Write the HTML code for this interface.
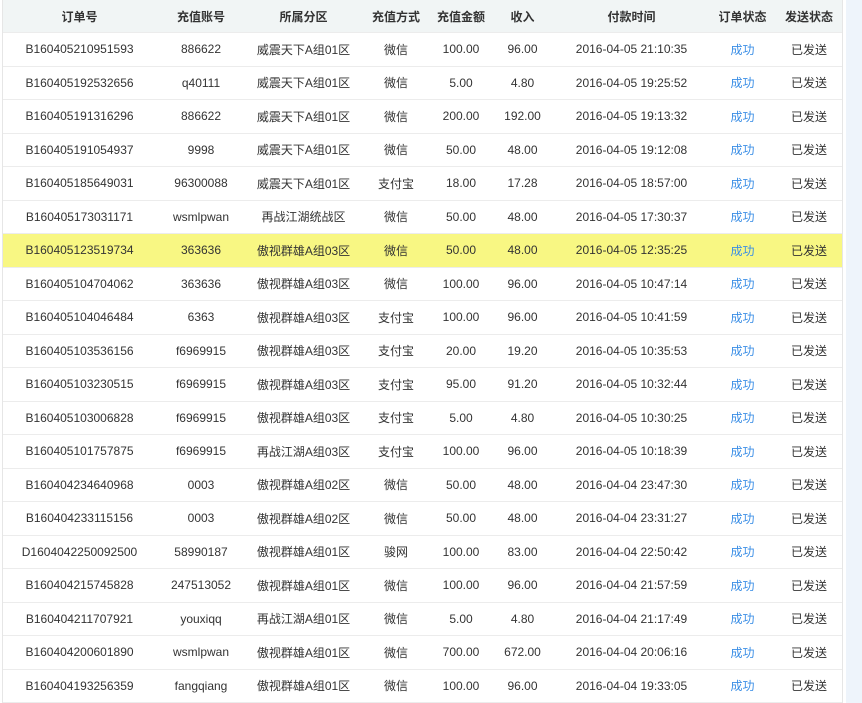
<!DOCTYPE html>
<html><head><meta charset="utf-8"><style>
*{margin:0;padding:0;box-sizing:border-box}
body{width:862px;height:703px;overflow:hidden;background:#fff;font-family:"Liberation Sans","Noto Sans CJK SC",sans-serif;font-size:12px;color:#333;position:relative}
.side{position:absolute;left:846px;top:0;width:16px;height:703px;background:#eef4fb}
.tbl{position:absolute;left:2px;top:0;width:841px;height:703px;border-left:1px solid #e6e6e6;border-right:1px solid #e6e6e6}
.r{position:absolute;left:0;width:839px;height:33.5px;border-bottom:1px solid #ececec;display:flex;align-items:center}
.h{top:0;height:33px;background:#f1f5f5;font-weight:bold;color:#333}
.y{background:#f8f783}
.r span{display:block;text-align:center;white-space:nowrap}
.c1{width:153px}.c2{width:90px}.c3{width:115px}.c4{width:70px}.c5{width:60px}.c6{width:63px}.c7{width:155px}.c8{width:67px}.c9{width:66px}
.ok{color:#3a8ee6}
</style></head><body>
<div class="side"></div>
<div class="tbl">
<div class="r h"><span class="c1">订单号</span><span class="c2">充值账号</span><span class="c3">所属分区</span><span class="c4">充值方式</span><span class="c5">充值金额</span><span class="c6">收入</span><span class="c7">付款时间</span><span class="c8">订单状态</span><span class="c9">发送状态</span></div>
<div id="rows"></div>
</div>
<div class="r" style="top:33px;left:3px"><span class="c1">B160405210951593</span><span class="c2">886622</span><span class="c3">威震天下A组01区</span><span class="c4">微信</span><span class="c5">100.00</span><span class="c6">96.00</span><span class="c7">2016-04-05 21:10:35</span><span class="c8 ok">成功</span><span class="c9">已发送</span></div>
<div class="r" style="top:66.5px;left:3px"><span class="c1">B160405192532656</span><span class="c2">q40111</span><span class="c3">威震天下A组01区</span><span class="c4">微信</span><span class="c5">5.00</span><span class="c6">4.80</span><span class="c7">2016-04-05 19:25:52</span><span class="c8 ok">成功</span><span class="c9">已发送</span></div>
<div class="r" style="top:100px;left:3px"><span class="c1">B160405191316296</span><span class="c2">886622</span><span class="c3">威震天下A组01区</span><span class="c4">微信</span><span class="c5">200.00</span><span class="c6">192.00</span><span class="c7">2016-04-05 19:13:32</span><span class="c8 ok">成功</span><span class="c9">已发送</span></div>
<div class="r" style="top:133.5px;left:3px"><span class="c1">B160405191054937</span><span class="c2">9998</span><span class="c3">威震天下A组01区</span><span class="c4">微信</span><span class="c5">50.00</span><span class="c6">48.00</span><span class="c7">2016-04-05 19:12:08</span><span class="c8 ok">成功</span><span class="c9">已发送</span></div>
<div class="r" style="top:167px;left:3px"><span class="c1">B160405185649031</span><span class="c2">96300088</span><span class="c3">威震天下A组01区</span><span class="c4">支付宝</span><span class="c5">18.00</span><span class="c6">17.28</span><span class="c7">2016-04-05 18:57:00</span><span class="c8 ok">成功</span><span class="c9">已发送</span></div>
<div class="r" style="top:200.5px;left:3px"><span class="c1">B160405173031171</span><span class="c2">wsmlpwan</span><span class="c3">再战江湖统战区</span><span class="c4">微信</span><span class="c5">50.00</span><span class="c6">48.00</span><span class="c7">2016-04-05 17:30:37</span><span class="c8 ok">成功</span><span class="c9">已发送</span></div>
<div class="r y" style="top:234px;left:3px"><span class="c1">B160405123519734</span><span class="c2">363636</span><span class="c3">傲视群雄A组03区</span><span class="c4">微信</span><span class="c5">50.00</span><span class="c6">48.00</span><span class="c7">2016-04-05 12:35:25</span><span class="c8 ok">成功</span><span class="c9">已发送</span></div>
<div class="r" style="top:267.5px;left:3px"><span class="c1">B160405104704062</span><span class="c2">363636</span><span class="c3">傲视群雄A组03区</span><span class="c4">微信</span><span class="c5">100.00</span><span class="c6">96.00</span><span class="c7">2016-04-05 10:47:14</span><span class="c8 ok">成功</span><span class="c9">已发送</span></div>
<div class="r" style="top:301px;left:3px"><span class="c1">B160405104046484</span><span class="c2">6363</span><span class="c3">傲视群雄A组03区</span><span class="c4">支付宝</span><span class="c5">100.00</span><span class="c6">96.00</span><span class="c7">2016-04-05 10:41:59</span><span class="c8 ok">成功</span><span class="c9">已发送</span></div>
<div class="r" style="top:334.5px;left:3px"><span class="c1">B160405103536156</span><span class="c2">f6969915</span><span class="c3">傲视群雄A组03区</span><span class="c4">支付宝</span><span class="c5">20.00</span><span class="c6">19.20</span><span class="c7">2016-04-05 10:35:53</span><span class="c8 ok">成功</span><span class="c9">已发送</span></div>
<div class="r" style="top:368px;left:3px"><span class="c1">B160405103230515</span><span class="c2">f6969915</span><span class="c3">傲视群雄A组03区</span><span class="c4">支付宝</span><span class="c5">95.00</span><span class="c6">91.20</span><span class="c7">2016-04-05 10:32:44</span><span class="c8 ok">成功</span><span class="c9">已发送</span></div>
<div class="r" style="top:401.5px;left:3px"><span class="c1">B160405103006828</span><span class="c2">f6969915</span><span class="c3">傲视群雄A组03区</span><span class="c4">支付宝</span><span class="c5">5.00</span><span class="c6">4.80</span><span class="c7">2016-04-05 10:30:25</span><span class="c8 ok">成功</span><span class="c9">已发送</span></div>
<div class="r" style="top:435px;left:3px"><span class="c1">B160405101757875</span><span class="c2">f6969915</span><span class="c3">再战江湖A组03区</span><span class="c4">支付宝</span><span class="c5">100.00</span><span class="c6">96.00</span><span class="c7">2016-04-05 10:18:39</span><span class="c8 ok">成功</span><span class="c9">已发送</span></div>
<div class="r" style="top:468.5px;left:3px"><span class="c1">B160404234640968</span><span class="c2">0003</span><span class="c3">傲视群雄A组02区</span><span class="c4">微信</span><span class="c5">50.00</span><span class="c6">48.00</span><span class="c7">2016-04-04 23:47:30</span><span class="c8 ok">成功</span><span class="c9">已发送</span></div>
<div class="r" style="top:502px;left:3px"><span class="c1">B160404233115156</span><span class="c2">0003</span><span class="c3">傲视群雄A组02区</span><span class="c4">微信</span><span class="c5">50.00</span><span class="c6">48.00</span><span class="c7">2016-04-04 23:31:27</span><span class="c8 ok">成功</span><span class="c9">已发送</span></div>
<div class="r" style="top:535.5px;left:3px"><span class="c1">D1604042250092500</span><span class="c2">58990187</span><span class="c3">傲视群雄A组01区</span><span class="c4">骏网</span><span class="c5">100.00</span><span class="c6">83.00</span><span class="c7">2016-04-04 22:50:42</span><span class="c8 ok">成功</span><span class="c9">已发送</span></div>
<div class="r" style="top:569px;left:3px"><span class="c1">B160404215745828</span><span class="c2">247513052</span><span class="c3">傲视群雄A组01区</span><span class="c4">微信</span><span class="c5">100.00</span><span class="c6">96.00</span><span class="c7">2016-04-04 21:57:59</span><span class="c8 ok">成功</span><span class="c9">已发送</span></div>
<div class="r" style="top:602.5px;left:3px"><span class="c1">B160404211707921</span><span class="c2">youxiqq</span><span class="c3">再战江湖A组01区</span><span class="c4">微信</span><span class="c5">5.00</span><span class="c6">4.80</span><span class="c7">2016-04-04 21:17:49</span><span class="c8 ok">成功</span><span class="c9">已发送</span></div>
<div class="r" style="top:636px;left:3px"><span class="c1">B160404200601890</span><span class="c2">wsmlpwan</span><span class="c3">傲视群雄A组01区</span><span class="c4">微信</span><span class="c5">700.00</span><span class="c6">672.00</span><span class="c7">2016-04-04 20:06:16</span><span class="c8 ok">成功</span><span class="c9">已发送</span></div>
<div class="r" style="top:669.5px;left:3px"><span class="c1">B160404193256359</span><span class="c2">fangqiang</span><span class="c3">傲视群雄A组01区</span><span class="c4">微信</span><span class="c5">100.00</span><span class="c6">96.00</span><span class="c7">2016-04-04 19:33:05</span><span class="c8 ok">成功</span><span class="c9">已发送</span></div>
</body></html>
